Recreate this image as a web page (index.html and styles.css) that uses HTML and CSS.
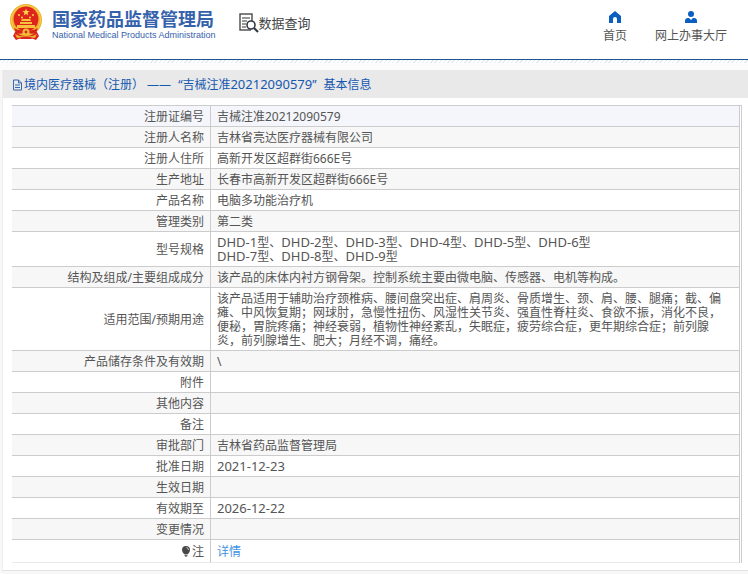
FILE: index.html
```html
<!DOCTYPE html>
<html lang="zh-CN">
<head>
<meta charset="utf-8">
<meta name="viewport" content="width=device-width, initial-scale=1">
<title>数据查询 - 国家药品监督管理局</title>
<link rel="stylesheet" href="styles.css">
</head>
<body>
<header class="site-header">
  <a class="brand" href="#">
    <svg class="emblem" viewBox="0 0 34 36" aria-hidden="true">
      <path d="M7 26 4 32l3 4 5-2 5 1 5-1 5 2 3-4-3-6z" fill="#d9231c"/>
      <circle cx="17" cy="16" r="16" fill="#eeb12c"/>
      <circle cx="17" cy="16" r="14.6" fill="none" stroke="#f8cf52" stroke-width="1"/>
      <circle cx="17" cy="15" r="12.4" fill="#df241c"/>
      <path d="m17 4.500 1 2.400 2.600.2-2 1.700.6 2.500-2.200-1.400-2.200 1.400.6-2.500-2-1.700 2.600-.2z" fill="#fbd449"/>
      <g fill="#fbd449"><circle cx="10" cy="11" r="1"/><circle cx="24" cy="11" r="1"/><circle cx="13" cy="13.500" r="1"/><circle cx="21" cy="13.500" r="1"/></g>
      <path d="m12 17 1-2h8l1 2zm-1 1h12v2H11zm-3 3h18v3H8z" fill="#f6c33c"/>
      <path d="M5 24q6 4 12 1 6 3 12-1l-2 5q-5 2-10-1-5 3-10 1z" fill="#d9231c"/>
      <circle cx="17" cy="28" r="3.500" fill="#f3bd35"/><circle cx="17" cy="28" r="1.400" fill="#d9231c"/>
      <path d="M6 30q5 3 11 2 6 1 11-2l-2 4q-4-1-9 0-5-1-9 0z" fill="#edaf2c"/>
      <path d="M10 34q7-3 14 0l-2 1H12z" fill="#d9231c"/>
    </svg>
    <span class="brand-text">
      <span class="brand-cn">国家药品监督管理局</span>
      <span class="brand-en">National Medical Products Administration</span>
    </span>
  </a>
  <h1 class="section-name">
    <svg class="search-doc" viewBox="0 0 20 20" aria-hidden="true">
      <path d="M12 17H1V1h12v7" fill="none" stroke="#555" stroke-width="1.500"/>
      <path d="M3 5h8M3 8h5M3 11h4M3 14h4" stroke="#777" stroke-width="1.300"/>
      <circle cx="12" cy="12" r="4" fill="#fff" stroke="#333845" stroke-width="1.600"/>
      <path d="m15 15 4 4" stroke="#333845" stroke-width="2.200"/>
    </svg>
    <span>数据查询</span>
  </h1>
  <nav class="site-nav">
    <a class="nav-link" href="#">
      <svg class="nav-icon" viewBox="0 0 12 12" aria-hidden="true"><path d="M6 0 0 5v7h4V8q0-2 2-2t2 2v4h4V5z" fill="#0b5fc0"/></svg>
      <span>首页</span>
    </a>
    <a class="nav-link" href="#">
      <svg class="nav-icon" viewBox="0 0 12 12" aria-hidden="true"><circle cx="6" cy="3" r="3" fill="#0b5fc0"/><path d="M0 12V10q0-3 3-3h1l2 2 2-2h1q3 0 3 3v2z" fill="#0b5fc0"/></svg>
      <span>网上办事大厅</span>
    </a>
  </nav>
</header>
<div class="hatch"></div>
<main class="card">
  <h2 class="card-title">
    <svg class="doc-icon" viewBox="0 0 11 12" aria-hidden="true"><path d="M1.500 1h5l3 3v7h-8zM6.500 1v3h3M3 6h5M3 8.500h5" fill="none" stroke="#3569b2"/></svg>
    <span class="title-parts"><span>境内医疗器械（注册） ——</span><span>“吉械注准<span class="code">20212090579</span>”</span><span>基本信息</span></span>
  </h2>
  <div class="table-frame">
    <table class="details">
      <tbody>
        <tr><th scope="row">注册证编号</th><td>吉械注准20212090579</td></tr>
        <tr><th scope="row">注册人名称</th><td>吉林省亮达医疗器械有限公司</td></tr>
        <tr><th scope="row">注册人住所</th><td>高新开发区超群街666E号</td></tr>
        <tr><th scope="row">生产地址</th><td>长春市高新开发区超群街666E号</td></tr>
        <tr><th scope="row">产品名称</th><td>电脑多功能治疗机</td></tr>
        <tr><th scope="row">管理类别</th><td>第二类</td></tr>
        <tr><th scope="row">型号规格</th><td><span class="code">DHD-1</span>型、<span class="code">DHD-2</span>型、<span class="code">DHD-3</span>型、<span class="code">DHD-4</span>型、<span class="code">DHD-5</span>型、<span class="code">DHD-6</span>型<br><span class="code">DHD-7</span>型、<span class="code">DHD-8</span>型、<span class="code">DHD-9</span>型</td></tr>
        <tr><th scope="row">结构及组成/主要组成成分</th><td>该产品的床体内衬方钢骨架。控制系统主要由微电脑、传感器、电机等构成。</td></tr>
        <tr><th scope="row">适用范围/预期用途</th><td>该产品适用于辅助治疗颈椎病、腰间盘突出症、肩周炎、骨质增生、颈、肩、腰、腿痛；截、偏瘫、中风恢复期；网球肘，急慢性扭伤、风湿性关节炎、强直性脊柱炎、食欲不振，消化不良，便秘，胃脘疼痛；神经衰弱，植物性神经紊乱，失眠症，疲劳综合症，更年期综合症；前列腺炎，前列腺增生、肥大；月经不调，痛经。</td></tr>
        <tr><th scope="row">产品储存条件及有效期</th><td>\</td></tr>
        <tr><th scope="row">附件</th><td></td></tr>
        <tr><th scope="row">其他内容</th><td></td></tr>
        <tr><th scope="row">备注</th><td></td></tr>
        <tr><th scope="row">审批部门</th><td>吉林省药品监督管理局</td></tr>
        <tr><th scope="row">批准日期</th><td><span class="code">2021-12-23</span></td></tr>
        <tr><th scope="row">生效日期</th><td></td></tr>
        <tr><th scope="row">有效期至</th><td><span class="code">2026-12-22</span></td></tr>
        <tr><th scope="row">变更情况</th><td></td></tr>
        <tr class="note-row"><th scope="row"><svg class="bulb" viewBox="0 0 8 11" aria-hidden="true"><path d="M4 0a4 4 0 0 0-4 4q0 2 2 4h4q2-2 2-4a4 4 0 0 0-4-4z" fill="#484848"/><path d="M2.500 8.500h3V10L4 11l-1.500-1z" fill="#666"/><path d="M4.500 1.500q2 .5 2 2.500" fill="none" stroke="#ccc"/></svg>注</th><td><a class="detail-link" href="#">详情</a></td></tr>
      </tbody>
    </table>
  </div>
</main>
</body>
</html>
```
FILE: styles.css
```css
* {
  box-sizing: border-box;
}

body {
  margin: 0;
  background: #f7f7f7;
  color: #555;
  font-family: "Noto Sans", "Noto Sans CJK SC", sans-serif;
  font-size: 12px;
  line-height: 14px;
}

a {
  color: inherit;
  text-decoration: none;
}

svg {
  flex: none;
}

.site-header {
  display: flex;
  align-items: flex-start;
  height: 60px;
  padding: 0 21px 0 9px;
  background: #fff;
  border-bottom: 1px solid #1d5494;
}

.brand {
  display: flex;
  gap: 9px;
  padding-top: 4px;
  color: #3562ab;
}

.emblem {
  width: 34px;
  height: 36px;
}

.brand-text {
  display: flex;
  flex-direction: column;
  padding-top: 3px;
  white-space: nowrap;
}

.brand-cn {
  font-family: "Noto Sans CJK SC", sans-serif;
  font-size: 18px;
  font-weight: 700;
  line-height: 22px;
}

.brand-en {
  font-family: "Liberation Sans", sans-serif;
  font-size: 9px;
  line-height: 12px;
}

.section-name {
  display: flex;
  align-items: center;
  margin: 0 0 0 23px;
  padding-top: 13px;
  color: #444;
  font-family: "Noto Sans CJK SC", sans-serif;
  font-size: 13px;
  font-weight: 400;
  line-height: 18px;
}

.search-doc {
  width: 20px;
  height: 20px;
}

.site-nav {
  display: flex;
  gap: 28px;
  margin-left: auto;
  padding-top: 11px;
}

.nav-link {
  display: flex;
  flex-direction: column;
  align-items: center;
  gap: 6px;
}

.nav-icon {
  width: 12px;
  height: 12px;
}

.hatch {
  height: 10px;
  background:
    repeating-linear-gradient(135deg, #e4e8f0 0 1px, #fff 1px 3px) top / 100% 3px no-repeat,
    #fcfcfc;
}

.card {
  margin-left: 2px;
  padding-bottom: 7px;
  background: #fff;
  border-left: 1px solid #eee;
  border-bottom: 1px solid #e2e2e2;
}

.card-title {
  display: flex;
  align-items: center;
  gap: 1px;
  height: 28px;
  margin: 0 0 7px;
  padding: 2px 0 0 9px;
  background: #e9e9e9;
  color: #1558b0;
  font-size: 12px;
  font-weight: 400;
}

.title-parts {
  display: flex;
  gap: 7px;
}

.doc-icon {
  width: 11px;
  height: 12px;
}

.code {
  font-size: 13px;
  line-height: 1;
}

.table-frame {
  margin: 0 6px 0 9px;
  padding-right: 1px;
  border-top: 1px solid #ccc;
  border-right: 1px solid #ccc;
}

.details {
  width: 100%;
  border-collapse: separate;
  border-spacing: 0;
  border-right: 1px solid #ccc;
}

.details th,
.details td {
  height: 21px;
  padding: 4px 8px 2px 6px;
  border-bottom: 1px solid #ccc;
  font-weight: 400;
  text-align: left;
  vertical-align: middle;
}

.details th {
  width: 199px;
  padding-right: 6px;
  border-right: 1px solid #ccc;
  text-align: right;
}

.details tr:nth-child(even) {
  background: #f7f7f7;
}

.details tr:first-child {
  background: #f4f6fb;
}

.details .note-row th,
.details .note-row td {
  height: 23px;
  border-bottom-color: #eaeaea;
}

.bulb {
  width: 8px;
  height: 11px;
  margin-right: 2px;
  vertical-align: -1px;
}

.detail-link {
  color: #4292e2;
}
```
